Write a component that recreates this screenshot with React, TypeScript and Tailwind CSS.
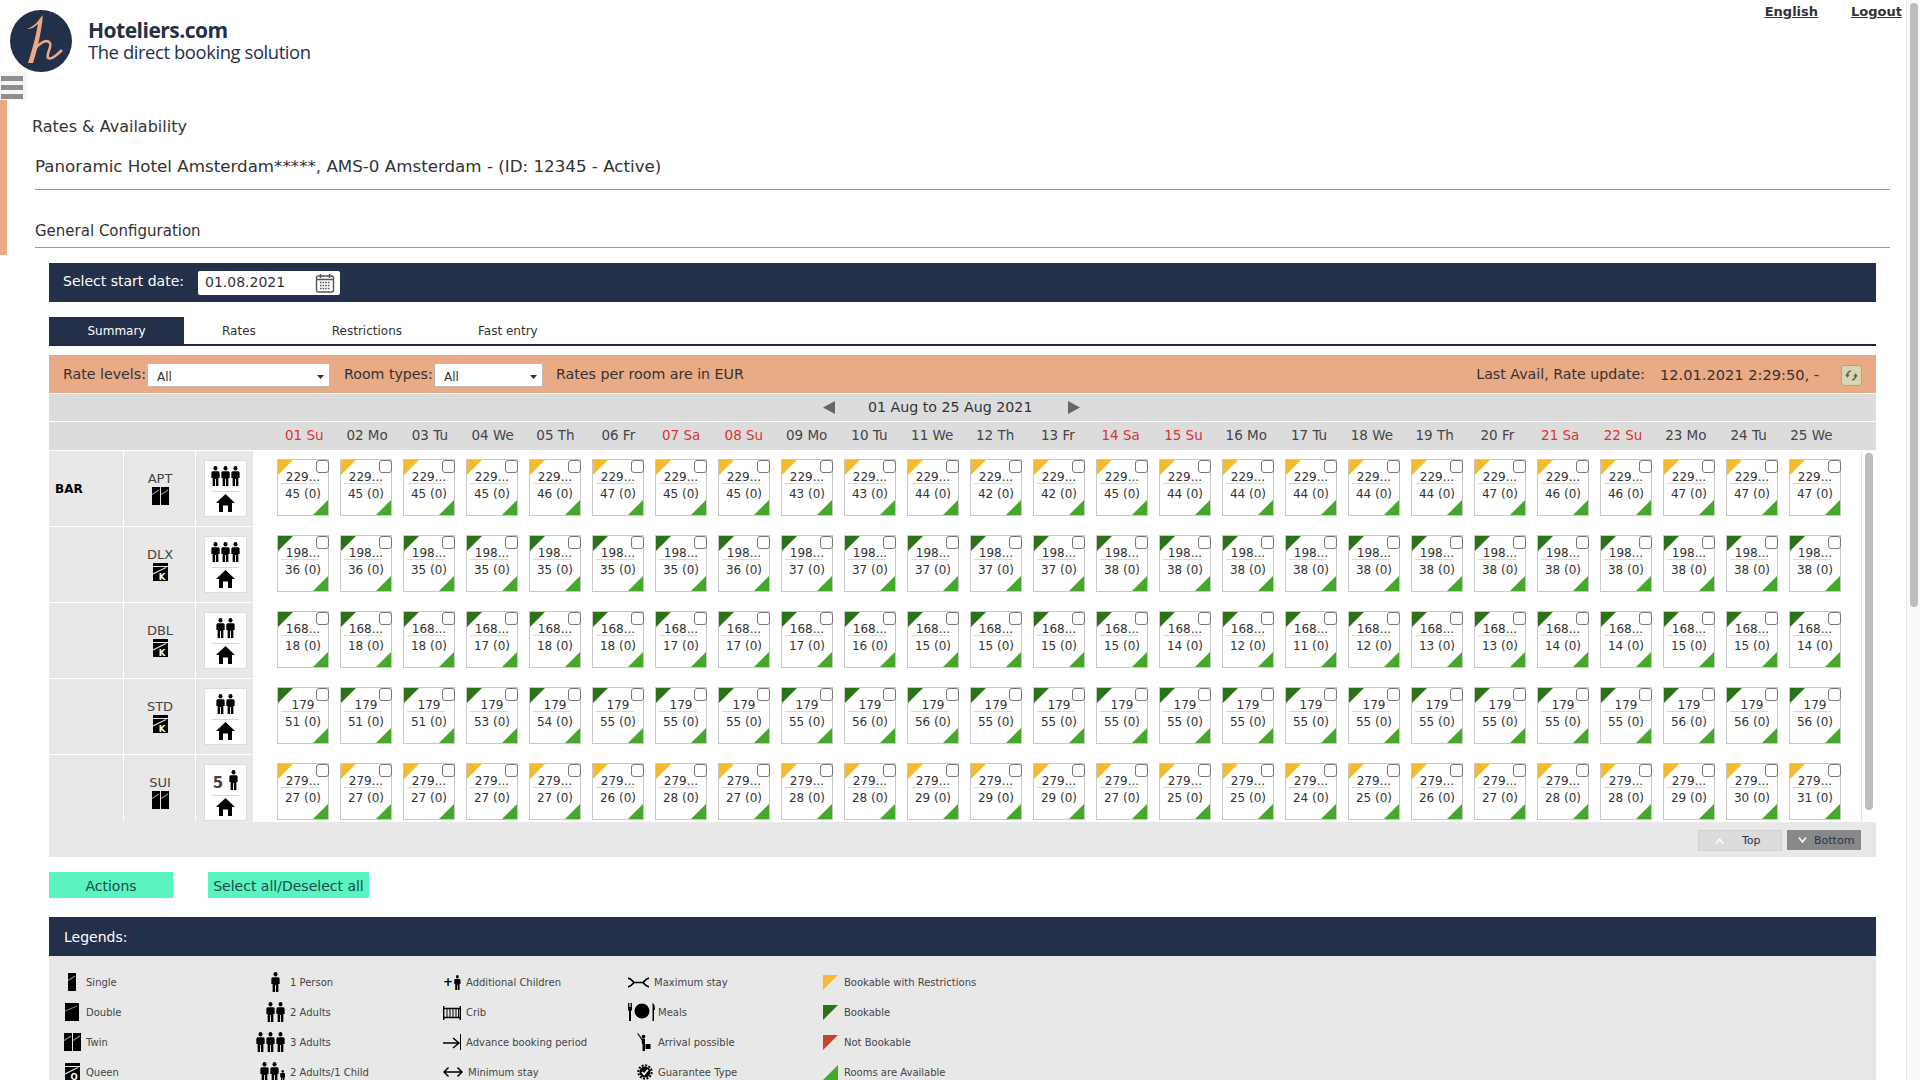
import React from "react";

const DATES = [
  "01 Su", "02 Mo", "03 Tu", "04 We", "05 Th", "06 Fr", "07 Sa", "08 Su", "09 Mo", "10 Tu",
  "11 We", "12 Th", "13 Fr", "14 Sa", "15 Su", "16 Mo", "17 Tu", "18 We", "19 Th", "20 Fr",
  "21 Sa", "22 Su", "23 Mo", "24 Tu", "25 We",
];

type RowData = {
  code: string;
  bed: "twin" | "king";
  people: number;
  price: string;
  flag: "yellow" | "green";
  avail: number[];
};

const ROWS: RowData[] = [
  { code: "APT", bed: "twin", people: 3, price: "229...", flag: "yellow", avail: [45, 45, 45, 45, 46, 47, 45, 45, 43, 43, 44, 42, 42, 45, 44, 44, 44, 44, 44, 47, 46, 46, 47, 47, 47] },
  { code: "DLX", bed: "king", people: 3, price: "198...", flag: "green", avail: [36, 36, 35, 35, 35, 35, 35, 36, 37, 37, 37, 37, 37, 38, 38, 38, 38, 38, 38, 38, 38, 38, 38, 38, 38] },
  { code: "DBL", bed: "king", people: 2, price: "168...", flag: "green", avail: [18, 18, 18, 17, 18, 18, 17, 17, 17, 16, 15, 15, 15, 15, 14, 12, 11, 12, 13, 13, 14, 14, 15, 15, 14] },
  { code: "STD", bed: "king", people: 2, price: "179", flag: "green", avail: [51, 51, 51, 53, 54, 55, 55, 55, 55, 56, 56, 55, 55, 55, 55, 55, 55, 55, 55, 55, 55, 55, 56, 56, 56] },
  { code: "SUI", bed: "twin", people: 5, price: "279...", flag: "yellow", avail: [27, 27, 27, 27, 27, 26, 28, 27, 28, 28, 29, 29, 29, 27, 25, 25, 24, 25, 26, 27, 28, 28, 29, 30, 31] },
];

function Person({ h = 20 }: { h?: number }) {
  return (
    <svg width={h * 0.45} height={h} viewBox="0 0 10 20" preserveAspectRatio="none" fill="#000">
      <circle cx="5" cy="2.300" r="2.200" />
      <path d="M2 5.200h6q1.600 0 1.600 1.600V12H8.200v8H5.500v-7h-1v7H1.800v-8H.4V6.800Q.4 5.200 2 5.200z" />
    </svg>
  );
}

function House() {
  return (
    <svg width="19" height="18" viewBox="0 0 19 18" fill="#000">
      <path d="M9.500 0 19 9h-3v9h-4v-6.500H7V18H3V9H0z" />
    </svg>
  );
}

function SingleBed() {
  return (
    <svg width="8" height="18" viewBox="0 0 8 18">
      <rect width="8" height="18" fill="#000" />
      <path d="M0 7.500 7 3" stroke="#888" strokeWidth="1.200" />
    </svg>
  );
}

function TwinBed() {
  return (
    <span className="flex gap-px">
      <SingleBed />
      <SingleBed />
    </span>
  );
}

function DoubleBed() {
  return (
    <svg width="14" height="18" viewBox="0 0 14 18">
      <rect width="14" height="18" fill="#000" />
      <path d="M0 8 12 3" stroke="#888" strokeWidth="1" />
    </svg>
  );
}

function KingBed({ letter = "K" }: { letter?: string }) {
  return (
    <svg width="15" height="18" viewBox="0 0 15 18">
      <rect width="15" height="3" fill="#000" />
      <rect y="4" width="15" height="14" fill="#000" />
      <path d="M0 11 13 4.500" stroke="#ddd" strokeWidth="1.200" />
      <text x="9" y="16.500" fontSize="8.500" fontWeight="700" fill="#fff" textAnchor="middle" fontFamily="DejaVu Sans">
        {letter}
      </text>
    </svg>
  );
}

function Corner({ color, flip }: { color: string; flip?: boolean }) {
  return (
    <svg width="15" height="15" viewBox="0 0 15 15">
      <polygon points={flip ? "15,0 15,15 0,15" : "0,0 15,0 0,15"} fill={color} />
    </svg>
  );
}

function Card({ price, avail, flag }: { price: string; avail: number; flag: RowData["flag"] }) {
  return (
    <div className="relative h-[57px] w-[52px] shrink-0 border border-[#c8c8c8] bg-white text-[12px] text-[#333]">
      <span className="absolute left-0 top-0 flex">
        <Corner color={flag === "yellow" ? "#f5bb30" : "#2b7218"} />
      </span>
      <input
        type="checkbox"
        readOnly
        className="absolute -right-[1px] top-0 h-[13px] w-[13px] appearance-none rounded-[3px] border border-[#777] bg-white"
      />
      <div className="mt-[11px] h-[12px] text-center leading-[13px]">{price}</div>
      <div className="ml-[3px] h-px w-[38px] bg-[#d8d8d8]" />
      <div className="mt-[2px] h-[16px] text-center leading-[16px]">{avail} (0)</div>
      <span className="absolute bottom-0 right-0 flex">
        <Corner color="#45a82a" flip />
      </span>
    </div>
  );
}

function RoomRow({ row, first }: { row: RowData; first: boolean }) {
  return (
    <div className="flex h-[76px] shrink-0">
      <div className="flex h-[75px] w-[74px] shrink-0 items-center bg-[#e8e8e8] pl-[6px] pt-[1px] text-[12px] font-bold text-black">
        {first ? "BAR" : ""}
      </div>
      <div className="ml-px flex h-[75px] w-[71px] shrink-0 flex-col items-center bg-[#e8e8e8] pl-[1px] pt-[19px] text-[13px] leading-[17px] text-[#444]">
        <span>{row.code}</span>
        <span className="flex">{row.bed === "twin" ? <TwinBed /> : <KingBed />}</span>
      </div>
      <div className="ml-px flex h-[75px] w-[57px] shrink-0 items-start bg-[#e8e8e8] pl-[8px] pt-[9px]">
        <div className="flex h-[57px] w-[43px] flex-col items-center border border-[#dcdcdc] bg-white">
          <div className="flex h-[30px] items-center gap-[1px]">
            {row.people === 5 && <span className="mr-[5px] mt-[6px] text-[15px] font-bold text-[#444]">5</span>}
            {Array.from({ length: row.people === 5 ? 1 : row.people }).map((_, i) => (
              <Person key={i} />
            ))}
          </div>
          <div className="h-px w-[27px] bg-[#d8d8d8]" />
          <div className="mt-[2px] flex">
            <House />
          </div>
        </div>
      </div>
      <div className="flex flex-1 gap-[11px] pl-[24px] pt-[8px]">
        {row.avail.map((a, i) => (
          <Card key={i} price={row.price} avail={a} flag={row.flag} />
        ))}
      </div>
    </div>
  );
}

function FakeSelect({ w, value }: { w: string; value: string }) {
  return (
    <div className={`${w} flex h-[24px] items-center justify-between rounded-[2px] border border-[#bbb] bg-white pl-[9px] pr-[5px] pt-[3px] text-[12px] text-[#333]`}>
      <span>{value}</span>
      <svg width="7" height="4" viewBox="0 0 7 4" fill="#333">
        <polygon points="0,0 7,0 3.500,4" />
      </svg>
    </div>
  );
}

function LegendRow({ box, icon, label }: { box: string; icon: React.ReactNode; label: string }) {
  return (
    <div className="flex h-[30px] items-center">
      <span className={`${box} flex shrink-0 items-center`}>{icon}</span>
      <span>{label}</span>
    </div>
  );
}

function Crib() {
  return (
    <svg width="18" height="15" viewBox="0 0 18 15" fill="none" stroke="#000">
      <path d="M.7 1v14M17.300 1v14" strokeWidth="1.400" />
      <path d="M1 3.500h16M1 12.500h16" strokeWidth="1.400" />
      <path d="M4 4v8M7 4v8M10 4v8M13 4v8M15.500 4v8" strokeWidth="1" />
    </svg>
  );
}

function AdvanceArrow() {
  return (
    <svg width="18" height="16" viewBox="0 0 18 16" fill="none" stroke="#000">
      <path d="M0 9h16M10 4l6 5-6 5" strokeWidth="1.500" />
      <path d="M17.500 0v16" strokeWidth="1" />
    </svg>
  );
}

function MinStay() {
  return (
    <svg width="20" height="12" viewBox="0 0 20 12" fill="none" stroke="#000" strokeWidth="1.500">
      <path d="M1 6h18M5.500 1.500 1 6l4.500 4.500M14.500 1.500 19 6l-4.500 4.500" />
    </svg>
  );
}

function MaxStay() {
  return (
    <svg width="21" height="11" viewBox="0 0 21 11" fill="none" stroke="#000" strokeWidth="1.700">
      <path d="M0 1c4 1 5 4 6 4.500h9c1-.5 2-3.500 6-4.500M0 10c4-1 5-3.500 6-4.500M21 10c-4-1-5-3.500-6-4.500" />
    </svg>
  );
}

function Meals() {
  return (
    <svg width="27" height="18" viewBox="0 0 27 18" fill="#000">
      <path d="M0 0h.9v4h.7V0h.8v4h.7V0H4v7l-1 1v10H1V8L0 7z" />
      <circle cx="14" cy="8" r="7.500" />
      <path d="M24.500 0q2.500 1 2.500 7h-1v11h-1.500z" />
    </svg>
  );
}

function Arrival() {
  return (
    <svg width="14" height="18" viewBox="0 0 14 18" fill="#000">
      <circle cx="6.500" cy="3.500" r="1.800" />
      <path d="M1 0 5 5.500h3V18H5.500v-7H5L4.500 7 .2.500z" />
      <rect x="8.500" y="11" width="5" height="5" />
    </svg>
  );
}

function Guarantee() {
  return (
    <svg width="16" height="16" viewBox="0 0 16 16">
      <circle cx="8" cy="8" r="5.500" fill="#000" />
      <circle cx="8" cy="8" r="6.700" fill="none" stroke="#000" strokeWidth="2" strokeDasharray="2 1.500" />
      <path d="M5 8l2.200 2.400L11 5.800" fill="none" stroke="#fff" strokeWidth="1.800" />
    </svg>
  );
}

function People({ n, child }: { n: number; child?: boolean }) {
  return (
    <span className="flex items-end gap-[1px]">
      {Array.from({ length: n }).map((_, i) => (
        <Person key={i} />
      ))}
      {child && <Person h={12} />}
    </span>
  );
}

export default function App() {
  return (
    <div className="flex h-screen w-full overflow-hidden bg-white font-['DejaVu_Sans',sans-serif] text-[#333]">
      <main className="w-[1906px] shrink-0">
        {/* header */}
        <header className="flex h-[72px] justify-between">
          <div className="flex pl-[10px] pt-[10px]">
            <svg width="62" height="62" viewBox="0 0 62 62">
              <circle cx="31" cy="31" r="31" fill="#233049" />
              <path d="M17 19C23 17 28 12 32.500 5 33 8 32 14 31 20 29 32 26 44 23 53L18 53C22 40 26 26 28 14 25 17 21 19 17 19z" fill="#eaaa85" />
              <path d="M24 41C28 34 36 28 40 33 42 37 36 44 38 48 41 50 47 45 52 40" fill="none" stroke="#eaaa85" strokeWidth="2.500" />
            </svg>
            <div className="ml-[16px] mt-[10px] font-['Open_Sans',sans-serif] text-[#233049]">
              <div className="text-[21px] font-bold leading-[21px] tracking-[-0.5px]">Hoteliers.com</div>
              <div className="text-[18.400px] leading-[21px] tracking-[-0.4px]">The direct booking solution</div>
            </div>
          </div>
          <nav className="flex gap-[33px] pr-[4px] pt-[3px] text-[13px] font-bold leading-[18px] underline">
            <a>English</a>
            <a>Logout</a>
          </nav>
        </header>

        {/* menu toggle */}
        <div className="flex h-[28px] w-[27px] flex-col gap-[4px] bg-[#f4f4f4] pl-[1px] pt-[4px]">
          <div className="h-[5px] w-[22px] bg-[#8e8e8e]" />
          <div className="h-[5px] w-[22px] bg-[#8e8e8e]" />
          <div className="h-[5px] w-[22px] bg-[#8e8e8e]" />
        </div>

        <div className="flex">
          <div className="h-[155px] w-[7px] shrink-0 bg-[#eaaa85]" />
          <div className="flex-1 pl-[28px] pr-[16px]">
            <div className="-ml-[3px] mt-[15px] h-[24px] text-[16px] leading-[24px]">Rates &amp; Availability</div>
            <div className="mt-[15px] h-[24px] text-[16.700px] leading-[24px]">
              Panoramic Hotel Amsterdam*****, AMS-0 Amsterdam - (ID: 12345 - Active)
            </div>
            <div className="mt-[11px] h-px bg-[#999]" />
            <div className="mt-[29px] h-[24px] text-[15px] leading-[24px]">General Configuration</div>
            <div className="mt-[4px] h-px bg-[#999]" />

            <div className="mx-[14px]">
              {/* start date */}
              <div className="mt-[15px] flex h-[39px] items-center bg-[#243049] pl-[14px]">
                <span className="w-[135px] pb-[2px] text-[14px] text-white">Select start date:</span>
                <div className="flex h-[24px] w-[142px] items-center justify-between rounded-[2px] bg-white pl-[7px] pr-[5px] text-[14px] text-[#333]">
                  <span>01.08.2021</span>
                  <svg width="20" height="20" viewBox="0 0 20 20" fill="none" stroke="#555">
                    <rect x="1.500" y="3" width="17" height="16" rx="2" strokeWidth="1.400" />
                    <path d="M5.500 1v4M14.500 1v4M2 6.500h16" strokeWidth="1.400" />
                    <path d="M5 9.500h10M5 12.500h10M5 15.500h10" strokeWidth="1.600" strokeDasharray="1.600 1" />
                  </svg>
                </div>
              </div>

              {/* tabs */}
              <div className="mt-[15px] flex h-[29px] border-b-2 border-[#1f2a3d] text-[12px]">
                <div className="flex w-[135px] items-center justify-center bg-[#243049] pt-[1px] text-white">Summary</div>
                <div className="ml-[38px] flex items-center pt-[1px]">Rates</div>
                <div className="ml-[76px] flex items-center pt-[1px]">Restrictions</div>
                <div className="ml-[76px] flex items-center pt-[1px]">Fast entry</div>
              </div>

              {/* filters */}
              <div className="mt-[9px] flex h-[38px] items-center bg-[#e9aa86] pl-[14px] pr-[14px] pt-[2px] text-[14.200px]">
                <span className="w-[84px]">Rate levels:</span>
                <FakeSelect w="w-[183px]" value="All" />
                <span className="ml-[14px] w-[90px]">Room types:</span>
                <FakeSelect w="w-[109px]" value="All" />
                <span className="ml-[13px]">Rates per room are in EUR</span>
                <span className="ml-auto">Last Avail, Rate update:</span>
                <span className="ml-[15px] text-[14.600px]">12.01.2021 2:29:50, -</span>
                <span className="ml-[22px] flex h-[21px] w-[21px] items-center justify-center rounded-[3px] border border-[#a9a587] bg-[#d9d4b2]">
                  <svg width="15" height="15" viewBox="0 0 15 15" fill="none" stroke="#5f6b4d" strokeWidth="1.500">
                    <path d="M3 8.500C3 5.500 4.500 3.500 7 3M2 6.500l1.500 2 1.500-2M12 6.500C12 9.500 10.500 11.500 8 12M13 8.500l-1.500-2-1.500 2" />
                  </svg>
                </span>
              </div>

              {/* date nav */}
              <div className="mt-px flex h-[27px] items-center bg-[#dcdcdc] pl-[774px] text-[14.200px]">
                <svg width="12" height="13" viewBox="0 0 12 13" fill="#666">
                  <polygon points="12,0 12,13 0,6.500" />
                </svg>
                <span className="ml-[33px] w-[200px]">01 Aug to 25 Aug 2021</span>
                <svg width="12" height="13" viewBox="0 0 12 13" fill="#666">
                  <polygon points="0,0 0,13 12,6.500" />
                </svg>
              </div>

              {/* day header */}
              <div className="mt-px flex h-[28px] items-center gap-[10.800px] bg-[#dcdcdc] pb-[2px] pl-[229.300px] text-[13.500px]">
                {DATES.map((d) => (
                  <span
                    key={d}
                    className={
                      d.endsWith("Sa") || d.endsWith("Su")
                        ? "w-[52px] shrink-0 text-center text-[#d9342f]"
                        : "w-[52px] shrink-0 text-center text-[#444]"
                    }
                  >
                    {d}
                  </span>
                ))}
              </div>

              {/* grid */}
              <div className="mt-px flex h-[371px] overflow-hidden">
                <div className="flex w-[1812px] shrink-0 flex-col">
                  {ROWS.map((r, i) => (
                    <RoomRow key={r.code} row={r} first={i === 0} />
                  ))}
                </div>
                <div className="flex-1 border-l border-[#e4e4e4] pl-[3px] pt-[2px]">
                  <div className="h-[357px] w-[8px] rounded-[4px] bg-[#bdbdbd]" />
                </div>
              </div>

              <div className="flex h-[35px] justify-end gap-[5px] bg-[#e8e8e8] pr-[15px] pt-[8px] text-[11px] text-[#2a3350]">
                <div className="flex h-[21px] w-[84px] items-center border border-[#d0d0d0] bg-[#dcdcdc] pl-[16px]">
                  <svg width="9" height="6" viewBox="0 0 9 6" fill="none" stroke="#fff" strokeWidth="1.500">
                    <path d="M1 5.500 4.500 1 8 5.500" />
                  </svg>
                  <span className="ml-[18px] pt-[2px]">Top</span>
                </div>
                <div className="flex h-[20px] w-[74px] items-center bg-[#888] pl-[11px]">
                  <svg width="9" height="6" viewBox="0 0 9 6" fill="none" stroke="#fff" strokeWidth="1.500">
                    <path d="M1 .5 4.500 5 8 .5" />
                  </svg>
                  <span className="ml-[7px] pt-[2px]">Bottom</span>
                </div>
              </div>

              {/* actions */}
              <div className="mt-[15px] flex h-[26px] text-[14px] text-[#1d4a4a]">
                <div className="flex w-[124px] items-center justify-center bg-[#5bf3c0] pt-[2px]">Actions</div>
                <div className="ml-[35px] flex w-[161px] items-center justify-center bg-[#5bf3c0] pt-[2px]">Select all/Deselect all</div>
              </div>

              {/* legend */}
              <div className="mt-[19px] flex h-[39px] items-center bg-[#243049] pl-[15px] pt-[2px] text-[14px] text-white">Legends:</div>
              <div className="flex h-[300px] bg-[#e8e8e8] pt-[11px] text-[10px] text-[#444]">
                <div className="ml-[13px] w-[188px]">
                  <LegendRow box="w-[24px] justify-center pr-[4px]" icon={<SingleBed />} label="Single" />
                  <LegendRow box="w-[24px] justify-center pr-[4px]" icon={<DoubleBed />} label="Double" />
                  <LegendRow box="w-[24px] justify-center pr-[4px]" icon={<TwinBed />} label="Twin" />
                  <LegendRow box="w-[24px] justify-center pr-[4px]" icon={<KingBed letter="Q" />} label="Queen" />
                </div>
                <div className="w-[193px]">
                  <LegendRow box="w-[40px] justify-end pr-[10px]" icon={<People n={1} />} label="1 Person" />
                  <LegendRow box="w-[40px] justify-end pr-[5px]" icon={<People n={2} />} label="2 Adults" />
                  <LegendRow box="w-[40px] justify-end pr-[5px]" icon={<People n={3} />} label="3 Adults" />
                  <LegendRow box="w-[40px] justify-end pr-[5px]" icon={<People n={2} child />} label="2 Adults/1 Child" />
                </div>
                <div className="w-[177px]">
                  <LegendRow
                    box="w-[23px]"
                    icon={
                      <span className="flex items-center gap-[1px] text-[12px] font-bold text-black">
                        +<Person h={15} />
                      </span>
                    }
                    label="Additional Children"
                  />
                  <LegendRow box="w-[23px]" icon={<Crib />} label="Crib" />
                  <LegendRow box="w-[23px]" icon={<AdvanceArrow />} label="Advance booking period" />
                  <LegendRow box="w-[25px]" icon={<MinStay />} label="Minimum stay" />
                </div>
                <div className="w-[203px] pl-[8px]">
                  <LegendRow box="w-[26px]" icon={<MaxStay />} label="Maximum stay" />
                  <LegendRow box="w-[30px]" icon={<Meals />} label="Meals" />
                  <LegendRow box="w-[30px] pl-[9px]" icon={<Arrival />} label="Arrival possible" />
                  <LegendRow box="w-[30px] pl-[9px]" icon={<Guarantee />} label="Guarantee Type" />
                </div>
                <div className="w-[250px]">
                  <LegendRow box="w-[21px]" icon={<Corner color="#f5bb30" />} label="Bookable with Restrictions" />
                  <LegendRow box="w-[21px]" icon={<Corner color="#2b7218" />} label="Bookable" />
                  <LegendRow box="w-[21px]" icon={<Corner color="#c8432f" />} label="Not Bookable" />
                  <LegendRow box="w-[21px]" icon={<Corner color="#45a82a" flip />} label="Rooms are Available" />
                </div>
              </div>
            </div>
          </div>
        </div>
      </main>

      {/* page scrollbar */}
      <div className="flex-1 border-l border-[#e8e8e8] bg-[#fafafa] pl-[3px] pt-[3px]">
        <div className="h-[604px] w-[8px] rounded-[4px] bg-[#bdbdbd]" />
      </div>
    </div>
  );
}
